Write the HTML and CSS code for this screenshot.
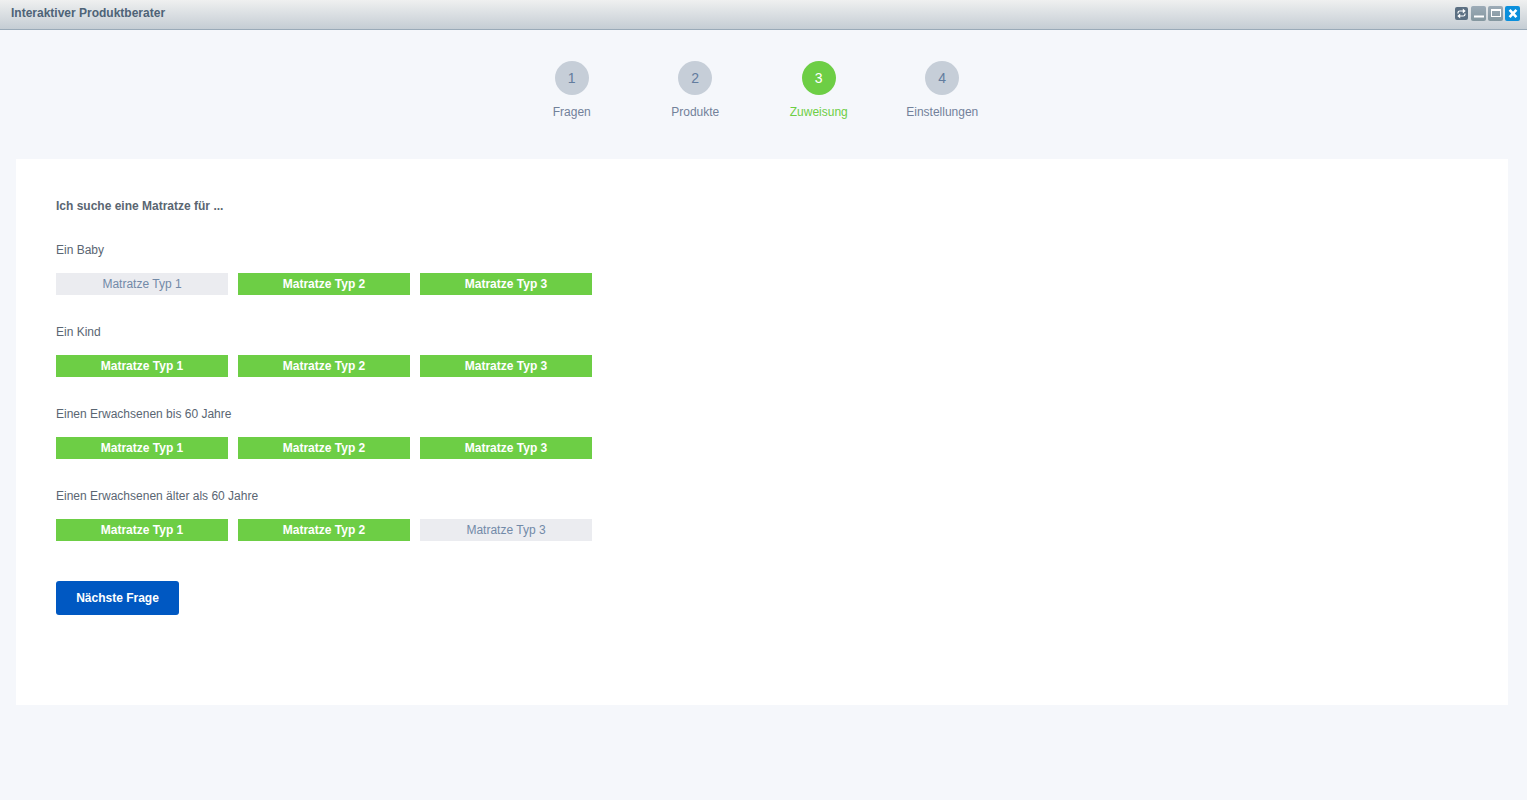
FILE: index.html
```html
<!DOCTYPE html>
<html lang="de">
<head>
  <meta charset="UTF-8">
  <title>Interaktiver Produktberater</title>
  <link rel="stylesheet" href="styles.css">
</head>
<body>
  <header class="titlebar">
    <span class="titlebar-title">Interaktiver Produktberater</span>
    <div class="window-controls">
      <button class="window-btn window-btn-refresh" aria-label="Aktualisieren">
        <svg viewBox="0 0 13 13" fill="none" stroke="#fff" stroke-width="1.2">
          <path d="M3 6.5V5.8c0-1.2.8-1.8 1.8-1.8H8.5"/>
          <path d="M7.8 1.6l2.9 2.4-2.9 2.4z" fill="#fff" stroke="none"/>
          <path d="M10 6.5v.7c0 1.2-.8 1.8-1.8 1.8H4.5"/>
          <path d="M5.2 6.6L2.3 9l2.9 2.4z" fill="#fff" stroke="none"/>
        </svg>
      </button>
      <button class="window-btn" aria-label="Minimieren">
        <svg viewBox="0 0 15 15" fill="#fff"><rect x="3" y="9.5" width="10" height="2"/></svg>
      </button>
      <button class="window-btn" aria-label="Maximieren">
        <svg viewBox="0 0 15 15" fill="none" stroke="#fff"><rect x="3.5" y="3.5" width="9" height="7" stroke-width="1"/><path d="M3 4h10" stroke-width="2"/></svg>
      </button>
      <button class="window-btn window-btn-close" aria-label="Schließen">
        <svg viewBox="0 0 15 15" fill="none" stroke="#fff" stroke-width="2.6"><path d="M4.6 3.8l6.8 7.4M11.4 3.8l-6.8 7.4"/></svg>
      </button>
    </div>
  </header>

  <ol class="steps">
    <li class="step"><span class="step-num">1</span><span class="step-label">Fragen</span></li>
    <li class="step"><span class="step-num">2</span><span class="step-label">Produkte</span></li>
    <li class="step step-active"><span class="step-num">3</span><span class="step-label">Zuweisung</span></li>
    <li class="step"><span class="step-num">4</span><span class="step-label">Einstellungen</span></li>
  </ol>

  <main class="panel">
    <h2 class="question">Ich suche eine Matratze für ...</h2>

    <section class="answer">
      <p class="answer-label">Ein Baby</p>
      <div class="types">
        <span class="type type-off">Matratze Typ 1</span>
        <span class="type">Matratze Typ 2</span>
        <span class="type">Matratze Typ 3</span>
      </div>
    </section>

    <section class="answer">
      <p class="answer-label">Ein Kind</p>
      <div class="types">
        <span class="type">Matratze Typ 1</span>
        <span class="type">Matratze Typ 2</span>
        <span class="type">Matratze Typ 3</span>
      </div>
    </section>

    <section class="answer">
      <p class="answer-label">Einen Erwachsenen bis 60 Jahre</p>
      <div class="types">
        <span class="type">Matratze Typ 1</span>
        <span class="type">Matratze Typ 2</span>
        <span class="type">Matratze Typ 3</span>
      </div>
    </section>

    <section class="answer">
      <p class="answer-label">Einen Erwachsenen älter als 60 Jahre</p>
      <div class="types">
        <span class="type">Matratze Typ 1</span>
        <span class="type">Matratze Typ 2</span>
        <span class="type type-off">Matratze Typ 3</span>
      </div>
    </section>

    <button class="next-btn">Nächste Frage</button>
  </main>
</body>
</html>
```

FILE: styles.css
```css
html,
body {
  height: 100%;
}

body {
  margin: 0;
  background-color: #f5f7fb;
  color: #5a6672;
  font-family: "Liberation Sans", Arial, sans-serif;
  font-size: 12px;
  line-height: 14px;
  overflow: hidden;
}

.titlebar {
  height: 29px;
  display: flex;
  align-items: flex-start;
  justify-content: space-between;
  padding: 0 7px 0 11px;
  background: linear-gradient(to bottom, #eff0f0, #c5cdd4);
  border-bottom: 1px solid #9aaab8;
}

.titlebar-title {
  margin-top: 6px;
  font-weight: 700;
  color: #4e6377;
}

.window-controls {
  display: flex;
  gap: 2px;
  margin-top: 6px;
}

.window-btn {
  width: 15px;
  height: 15px;
  padding: 0;
  border: none;
  border-radius: 2px;
  background: linear-gradient(to bottom, #9cabb7, #84979f);
}

.window-btn svg {
  display: block;
  width: 100%;
  height: 100%;
}

.window-btn-refresh {
  width: 13px;
  height: 13px;
  margin: 1px 1px 0 0;
  background: #5b6f82;
}

.window-btn-close {
  background: #0a8fdc;
}

.steps {
  list-style: none;
  display: flex;
  width: 494px;
  margin: 31px 0 0 510px;
  padding: 0;
}

.step {
  flex: 1;
  display: flex;
  flex-direction: column;
  align-items: center;
  color: #72819a;
}

.step-num {
  width: 34px;
  height: 34px;
  border-radius: 50%;
  background-color: #c6ced8;
  color: #627c9e;
  font-size: 14px;
  line-height: 34px;
  text-align: center;
}

.step-label {
  margin-top: 10px;
}

.step-active {
  color: #6dce45;
}

.step-active .step-num {
  background-color: #6dce45;
  color: #fff;
}

.panel {
  margin: 40px 19px 0 16px;
  height: 466px;
  padding: 40px;
  background-color: #fff;
}

.question {
  margin: 0;
  font-size: 12px;
  line-height: 14px;
  font-weight: 700;
  color: #5a6672;
}

.answer {
  margin-top: 30px;
}

.answer-label {
  margin: 0;
}

.types {
  display: flex;
  gap: 10px;
  margin-top: 16px;
}

.type {
  width: 172px;
  height: 22px;
  background-color: #6dce45;
  color: #fff;
  font-weight: 700;
  line-height: 22px;
  text-align: center;
}

.type-off {
  background-color: #ebecf0;
  color: #728aa8;
  font-weight: 400;
}

.next-btn {
  display: block;
  width: 123px;
  height: 34px;
  margin-top: 40px;
  padding: 0;
  border: none;
  border-radius: 3px;
  background-color: #0058c2;
  color: #fff;
  font-family: inherit;
  font-size: 12px;
  font-weight: 700;
}
```
